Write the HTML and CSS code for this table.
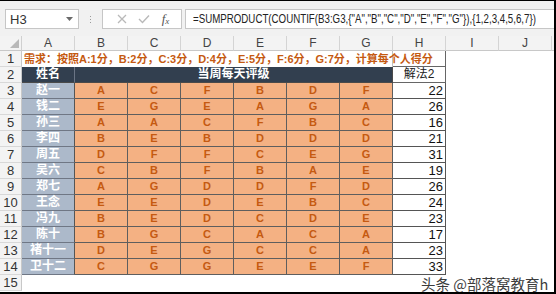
FILE: index.html
```html
<!DOCTYPE html>
<html lang="zh">
<head>
<meta charset="utf-8">
<link rel="stylesheet" href="styles.css">
</head>
<body>
<div class="frame">
  <div class="toolbar">
    <div class="namebox"><span class="nb-text">H3</span><svg class="nb-arrow" width="7" height="4" viewBox="0 0 7 4"><path d="M0 0H7L3.5 4Z" fill="#6a6a6a"/></svg></div>
    <div class="dots"><i></i><i></i><i></i></div>
    <div class="fxbtns">
      <svg width="10" height="10" viewBox="0 0 10 10"><path d="M1 1L9 9M9 1L1 9" stroke="#b9b9b9" stroke-width="1.3" fill="none"/></svg>
      <svg width="12" height="10" viewBox="0 0 12 10"><path d="M1 5L4.5 8.5L11 1.5" stroke="#b9b9b9" stroke-width="1.4" fill="none"/></svg>
      <span class="fx">f<sub>x</sub></span>
    </div>
    <div class="formula"><span class="ftext">=SUMPRODUCT(COUNTIF(B3:G3,{"A","B","C","D","E","F","G"}),{1,2,3,4,5,6,7})</span></div>
  </div>
  <div class="sheet">
    <div class="corner"><svg width="9" height="9" viewBox="0 0 9 9"><path d="M9 0V9H0Z" fill="#b8b8b8"/></svg></div>
    <div class="ch">A</div><div class="ch">B</div><div class="ch">C</div><div class="ch">D</div><div class="ch">E</div><div class="ch">F</div><div class="ch">G</div><div class="ch">H</div><div class="ch">I</div><div class="ch">J</div><div class="ch ch-fill"></div>

    <div class="rh">1</div><div class="req">需求：按照A:1分，B:2分，C:3分，D:4分，E:5分，F:6分，G:7分，计算每个人得分</div><div class="hcell"></div><div class="blank"></div>

    <div class="rh">2</div><div class="nmhead">姓名</div><div class="title">当周每天评级</div><div class="hcell hhead">解法2</div><div class="blank"></div>

    <div class="rh">3</div><div class="nm">赵一</div><div class="g">A</div><div class="g">C</div><div class="g">F</div><div class="g">B</div><div class="g">D</div><div class="g">F</div><div class="sc">22</div><div class="blank"></div>
    <div class="rh">4</div><div class="nm">钱二</div><div class="g">E</div><div class="g">G</div><div class="g">E</div><div class="g">A</div><div class="g">G</div><div class="g">A</div><div class="sc">26</div><div class="blank"></div>
    <div class="rh">5</div><div class="nm">孙三</div><div class="g">A</div><div class="g">A</div><div class="g">C</div><div class="g">F</div><div class="g">B</div><div class="g">C</div><div class="sc">16</div><div class="blank"></div>
    <div class="rh">6</div><div class="nm">李四</div><div class="g">B</div><div class="g">E</div><div class="g">B</div><div class="g">D</div><div class="g">D</div><div class="g">D</div><div class="sc">21</div><div class="blank"></div>
    <div class="rh">7</div><div class="nm">周五</div><div class="g">D</div><div class="g">F</div><div class="g">F</div><div class="g">C</div><div class="g">E</div><div class="g">G</div><div class="sc">31</div><div class="blank"></div>
    <div class="rh">8</div><div class="nm">吴六</div><div class="g">C</div><div class="g">B</div><div class="g">F</div><div class="g">B</div><div class="g">A</div><div class="g">E</div><div class="sc">19</div><div class="blank"></div>
    <div class="rh">9</div><div class="nm">郑七</div><div class="g">A</div><div class="g">G</div><div class="g">D</div><div class="g">D</div><div class="g">F</div><div class="g">D</div><div class="sc">26</div><div class="blank"></div>
    <div class="rh">10</div><div class="nm">王念</div><div class="g">E</div><div class="g">E</div><div class="g">D</div><div class="g">E</div><div class="g">B</div><div class="g">C</div><div class="sc">24</div><div class="blank"></div>
    <div class="rh">11</div><div class="nm">冯九</div><div class="g">B</div><div class="g">E</div><div class="g">D</div><div class="g">C</div><div class="g">D</div><div class="g">E</div><div class="sc">23</div><div class="blank"></div>
    <div class="rh">12</div><div class="nm">陈十</div><div class="g">B</div><div class="g">G</div><div class="g">C</div><div class="g">A</div><div class="g">C</div><div class="g">A</div><div class="sc">17</div><div class="blank"></div>
    <div class="rh">13</div><div class="nm">褚十一</div><div class="g">D</div><div class="g">E</div><div class="g">G</div><div class="g">C</div><div class="g">C</div><div class="g">A</div><div class="sc">23</div><div class="blank"></div>
    <div class="rh">14</div><div class="nm">卫十二</div><div class="g">C</div><div class="g">G</div><div class="g">G</div><div class="g">E</div><div class="g">E</div><div class="g">F</div><div class="sc">33</div><div class="blank"></div>

    <div class="rh">15</div><div class="blank wide"></div>
  </div>
  <div class="watermark">头条 @部落窝教育h</div>
</div>
</body>
</html>
```

FILE: styles.css
```css
* { box-sizing: border-box; }
html, body { margin: 0; padding: 0; background: #ffffff; }
body { font-family: "Liberation Sans", "Noto Sans CJK SC", sans-serif; }

.frame {
  position: relative;
  width: 556px;
  height: 294px;
  border-top: 1px solid #000;
  border-right: 2px solid #000;
  border-bottom: 2px solid #000;
  background: #fff;
  overflow: hidden;
}

.toolbar {
  height: 35px;
  background: #f1f1f1;
  display: flex;
  align-items: flex-start;
  padding: 8px 0 0 5px;
}
.namebox {
  width: 74px;
  height: 20px;
  background: #fff;
  border: 1px solid #c6c6c6;
  display: flex;
  align-items: center;
  justify-content: space-between;
  padding: 0 5px 0 4px;
  font-size: 13px;
  color: #333;
}
.nb-arrow { display: block; }
.dots {
  width: 23px;
  height: 20px;
  display: flex;
  flex-direction: column;
  align-items: center;
  justify-content: center;
  gap: 2px;
}
.dots i { display: block; width: 1px; height: 1px; background: #9a9a9a; }
.fxbtns {
  width: 80px;
  height: 20px;
  background: #fff;
  border: 1px solid #c6c6c6;
  display: flex;
  align-items: center;
  justify-content: space-around;
  padding: 0 6px 0 8px;
}
.fxbtns svg { display: block; }
.fx {
  font-family: "Liberation Serif", serif;
  font-style: italic;
  font-size: 13px;
  color: #555;
  line-height: 1;
}
.fx sub { font-size: 9px; vertical-align: -1px; }
.formula {
  margin-left: 3px;
  flex: 1;
  height: 20px;
  background: #fff;
  border: 1px solid #c6c6c6;
  border-right: none;
  padding-left: 7px;
  font-size: 13.5px;
  line-height: 18px;
  color: #222;
  white-space: nowrap;
  overflow: hidden;
}
.ftext {
  display: inline-block;
  transform: scaleX(0.72);
  transform-origin: 0 50%;
}

.sheet {
  display: grid;
  grid-template-columns: 22px repeat(10, 53px) 1fr;
  grid-template-rows: 15px repeat(15, 16px) 1fr;
  height: 256px;
}
.corner {
  background: #f3f3f3;
  border-right: 1px solid #d0d0d0;
  border-bottom: 1px solid #c8c8c8;
  display: flex;
  align-items: flex-end;
  justify-content: flex-end;
  padding: 0 2px 2px 0;
}
.corner svg { display: block; }
.ch {
  background: #f3f3f3;
  border-right: 1px solid #d4d4d4;
  border-bottom: 1px solid #c8c8c8;
  font-size: 12px;
  color: #444;
  text-align: center;
  line-height: 14px;
}
.ch-fill { border-right: none; }
.rh {
  background: #f3f3f3;
  border-right: 1px solid #c8c8c8;
  border-bottom: 1px solid #d8d8d8;
  font-size: 13px;
  color: #333;
  text-align: center;
  line-height: 15px;
}
.req {
  grid-column: span 7;
  border-right: 1px solid #bfbfbf;
  color: #c55a11;
  font-weight: bold;
  font-size: 11px;
  line-height: 16px;
  padding-left: 2px;
  white-space: nowrap;
}
.hcell {
  border-right: 1px solid #666;
  border-bottom: 1px solid #666;
}
.hhead {
  font-size: 12px;
  color: #222;
  text-align: center;
  line-height: 15px;
}
.blank { grid-column: span 3; }
.blank.wide { grid-column: span 11; }
.nmhead {
  background: #323f4f;
  border-right: 1px solid #6b7585;
  border-bottom: 1px solid #4a4a4a;
  color: #fff;
  font-weight: bold;
  font-size: 12px;
  text-align: center;
  line-height: 15px;
}
.title {
  grid-column: span 6;
  background: #323f4f;
  border-right: 1px solid #4a4a4a;
  border-bottom: 1px solid #4a4a4a;
  color: #fff;
  font-weight: bold;
  font-size: 12px;
  text-align: center;
  line-height: 15px;
}
.nm {
  background: #acb9ca;
  border-right: 1px solid #555;
  border-bottom: 1px solid #6f7785;
  color: #fff;
  font-weight: bold;
  font-size: 12px;
  text-align: center;
  line-height: 15px;
}
.g {
  background: #f4b183;
  border-right: 1px solid #5e5e5e;
  border-bottom: 1px solid #5e5e5e;
  color: #c55a11;
  font-weight: bold;
  font-size: 11px;
  text-align: center;
  line-height: 15px;
}
.sc {
  border-right: 1px solid #555;
  border-bottom: 1px solid #555;
  font-size: 13px;
  color: #111;
  text-align: right;
  padding-right: 2px;
  line-height: 15px;
}

.watermark {
  position: absolute;
  left: 421px;
  top: 274px;
  font-family: "Noto Sans CJK SC", sans-serif;
  font-size: 14.5px;
  line-height: 17px;
  color: #3c3c3c;
  white-space: nowrap;
  text-shadow: 1px 0 0 #fff, -1px 0 0 #fff, 0 1px 0 #fff, 0 -1px 0 #fff;
}
```
